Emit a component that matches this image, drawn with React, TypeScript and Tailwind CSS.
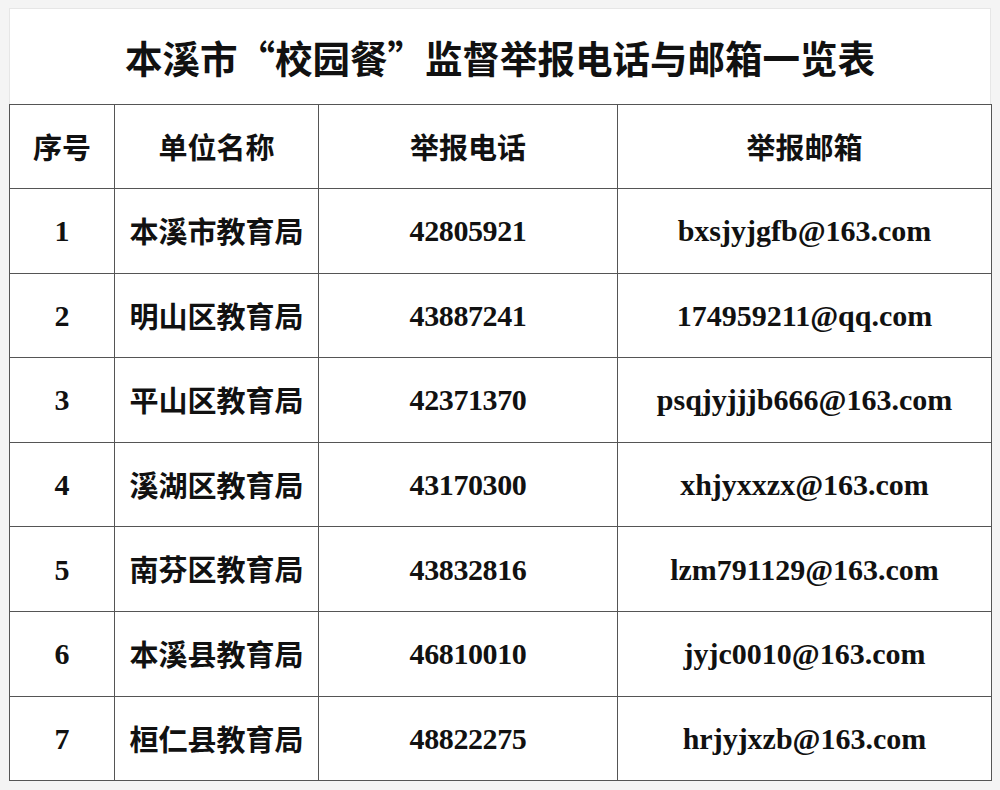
const rows = [
  { no: "1", name: "本溪市教育局", phone: "42805921", email: "bxsjyjgfb@163.com" },
  { no: "2", name: "明山区教育局", phone: "43887241", email: "174959211@qq.com" },
  { no: "3", name: "平山区教育局", phone: "42371370", email: "psqjyjjjb666@163.com" },
  { no: "4", name: "溪湖区教育局", phone: "43170300", email: "xhjyxxzx@163.com" },
  { no: "5", name: "南芬区教育局", phone: "43832816", email: "lzm791129@163.com" },
  { no: "6", name: "本溪县教育局", phone: "46810010", email: "jyjc0010@163.com" },
  { no: "7", name: "桓仁县教育局", phone: "48822275", email: "hrjyjxzb@163.com" },
];

const cjk = "font-['Noto_Sans_CJK_SC',sans-serif]";
const latin = "font-['Liberation_Serif','Noto_Sans_CJK_SC',serif]";

export default function App() {
  return (
    <div className="min-h-[790px] w-[1000px] bg-[#f4f4f4] pt-[8px]">
      <div className="mx-[9px] w-[982px] bg-white">
        <div className="flex h-[96px] items-center justify-center border border-b-0 border-[#e6e6e6]">
          <h1 className={`${cjk} text-[37.5px] font-bold leading-none tracking-[0px] text-[#111]`}>
            本溪市“校园餐”监督举报电话与邮箱一览表
          </h1>
        </div>
        <table className="w-[982px] table-fixed border-collapse text-[#111]">
          <colgroup>
            <col className="w-[105px]" />
            <col className="w-[204px]" />
            <col className="w-[299px]" />
            <col className="w-[374px]" />
          </colgroup>
          <thead>
            <tr className="h-[84px]">
              {["序号", "单位名称", "举报电话", "举报邮箱"].map((h) => (
                <th
                  key={h}
                  className={`${cjk} border-[1.5px] border-[#555] text-center align-middle text-[29px] font-bold`}
                >
                  {h}
                </th>
              ))}
            </tr>
          </thead>
          <tbody>
            {rows.map((r) => (
              <tr key={r.no} className="h-[84.6px]">
                <td className={`${latin} border-[1.5px] border-[#555] text-center text-[30px] font-bold`}>
                  {r.no}
                </td>
                <td className={`${cjk} border-[1.5px] border-[#555] text-center text-[29px] font-bold`}>
                  {r.name}
                </td>
                <td className={`${latin} border-[1.5px] border-[#555] text-center text-[30px] font-bold tracking-[-0.4px]`}>
                  {r.phone}
                </td>
                <td className={`${latin} border-[1.5px] border-[#555] text-center text-[30px] font-bold`}>
                  {r.email}
                </td>
              </tr>
            ))}
          </tbody>
        </table>
      </div>
    </div>
  );
}
